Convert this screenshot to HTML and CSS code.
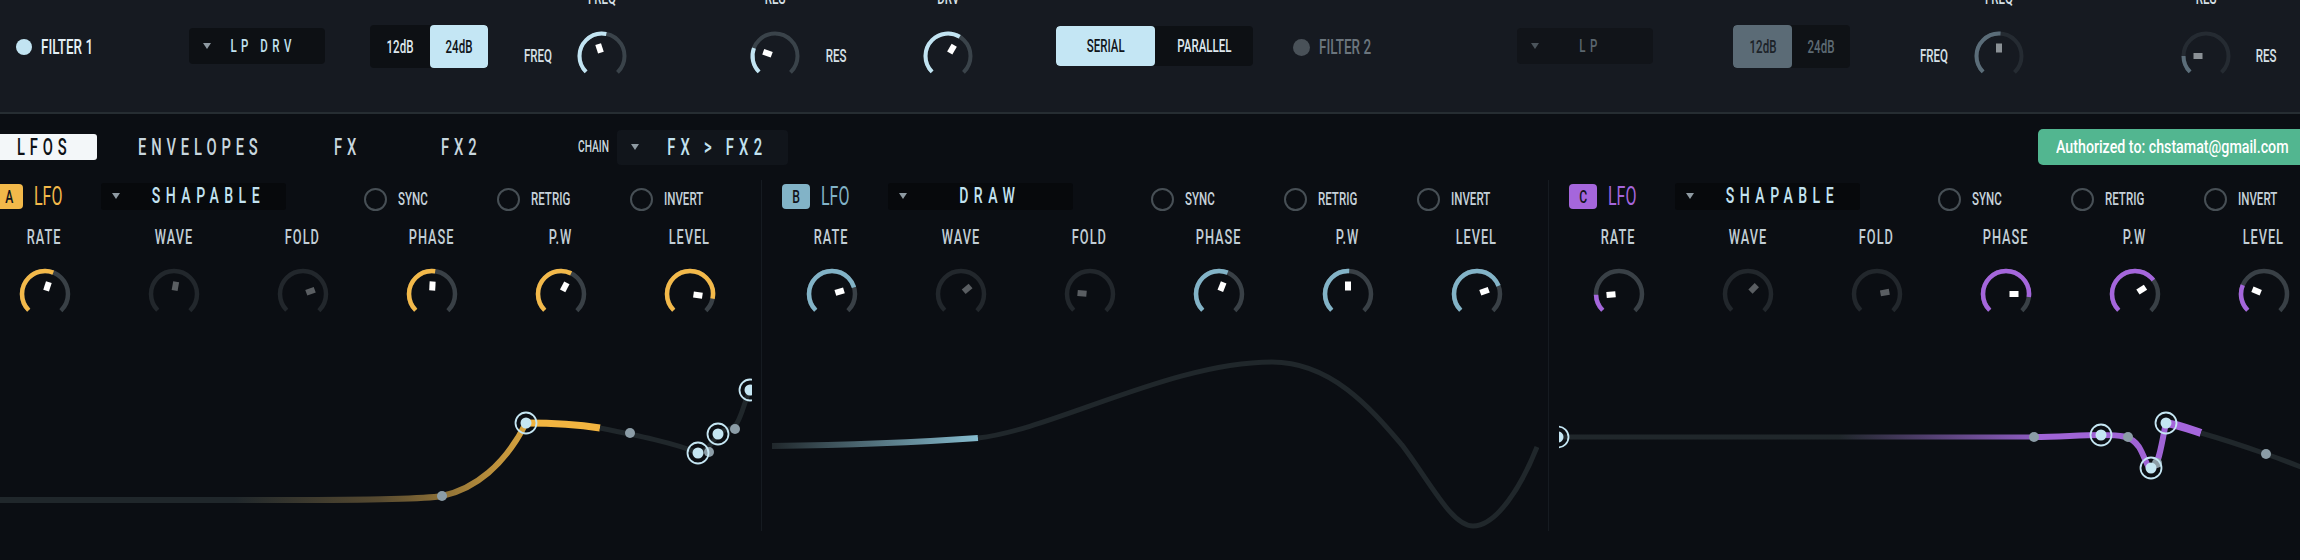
FILE: index.html
```html
<!DOCTYPE html>
<html lang="en">
<head>
<meta charset="utf-8">
<title>Synth LFO</title>
<link rel="stylesheet" href="styles.css">
</head>
<body>
<header class="top">
  <div class="ftog f1tog"><span class="dot"></span><span class="tx">FILTER 1</span></div>
  <div class="dd ddf1"><span class="tri"></span><span class="ddt"><span class="tx">LP DRV</span></span></div>
  <div class="seg segf1"><span class="b w60"><span class="tx">12dB</span></span><span class="b on w58"><span class="tx">24dB</span></span></div>
  <div class="slab ml30"><span class="tx">FREQ</span></div>
  <div class="tk tk1 ml18"><span class="tlab"><span class="tx">FREQ</span></span>
    <svg class="knob" viewBox="0 0 52 52"><circle class="trk" cx="26" cy="26" r="22.5" stroke-dasharray="106.03 200" transform="rotate(135 26 26)"/><circle class="val" cx="26" cy="26" r="22.5" stroke-dasharray="56.94 200" transform="rotate(135 26 26)"/><rect class="ptr" x="23" y="13.5" width="6" height="9" transform="rotate(-18 26 26)"/></svg></div>
  <div class="tk tk1 ml121"><span class="tlab"><span class="tx">RES</span></span>
    <svg class="knob" viewBox="0 0 52 52"><circle class="trk" cx="26" cy="26" r="22.5" stroke-dasharray="106.03 200" transform="rotate(135 26 26)"/><circle class="val" cx="26" cy="26" r="22.5" stroke-dasharray="25.53 200" transform="rotate(135 26 26)"/><rect class="ptr" x="23" y="13.5" width="6" height="9" transform="rotate(-70 26 26)"/></svg></div>
  <div class="slab ml15"><span class="tx">RES</span></div>
  <div class="tk tk1 ml66"><span class="tlab"><span class="tx">DRV</span></span>
    <svg class="knob" viewBox="0 0 52 52"><circle class="trk" cx="26" cy="26" r="22.5" stroke-dasharray="106.03 200" transform="rotate(135 26 26)"/><circle class="val" cx="26" cy="26" r="22.5" stroke-dasharray="64.80 200" transform="rotate(135 26 26)"/><rect class="ptr" x="23" y="13.5" width="6" height="9" transform="rotate(30 26 26)"/></svg></div>
  <div class="seg segser"><span class="b on w99"><span class="tx">SERIAL</span></span><span class="b w98"><span class="tx">PARALLEL</span></span></div>
  <div class="ftog f2tog"><span class="dot"></span><span class="tx">FILTER 2</span></div>
  <div class="dd ddf2"><span class="tri"></span><span class="ddt"><span class="tx">LP</span></span></div>
  <div class="seg segf2"><span class="b on w59"><span class="tx">12dB</span></span><span class="b w58"><span class="tx">24dB</span></span></div>
  <div class="slab ml64"><span class="tx">FREQ</span></div>
  <div class="tk tk2 ml19"><span class="tlab"><span class="tx">FREQ</span></span>
    <svg class="knob" viewBox="0 0 52 52"><circle class="trk" cx="26" cy="26" r="22.5" stroke-dasharray="106.03 200" transform="rotate(135 26 26)"/><circle class="val" cx="26" cy="26" r="22.5" stroke-dasharray="54.19 200" transform="rotate(135 26 26)"/><rect class="ptr" x="23" y="13.5" width="6" height="9" transform="rotate(0 26 26)"/></svg></div>
  <div class="tk tk2 ml155"><span class="tlab"><span class="tx">RES</span></span>
    <svg class="knob" viewBox="0 0 52 52"><circle class="trk" cx="26" cy="26" r="22.5" stroke-dasharray="106.03 200" transform="rotate(135 26 26)"/><circle class="val" cx="26" cy="26" r="22.5" stroke-dasharray="17.67 200" transform="rotate(135 26 26)"/><rect class="ptr" x="23" y="13.5" width="6" height="9" transform="rotate(-90 26 26)"/></svg></div>
  <div class="slab ml14"><span class="tx">RES</span></div>
</header>

<nav class="tabs">
  <div class="tab tab-on"><span class="tx">LFOS</span></div>
  <div class="tab tab-env"><span class="tx">ENVELOPES</span></div>
  <div class="tab tab-fx"><span class="tx">FX</span></div>
  <div class="tab tab-fx2"><span class="tx">FX2</span></div>
  <div class="chain"><span class="tx">CHAIN</span></div>
  <div class="dd ddch"><span class="tri"></span><span class="ddt"><span class="tx">FX &gt; FX2</span></span></div>
  <div class="auth"><span class="tx">Authorized to: chstamat@gmail.com</span></div>
</nav>

<main class="lfos">
  <!-- LFO A -->
  <section class="panel lfo-a">
    <div class="hdr">
      <span class="badge"><span class="tx">A</span></span>
      <span class="lfo"><span class="tx">LFO</span></span>
      <div class="ldd"><span class="tri"></span><span class="ddt"><span class="tx">SHAPABLE</span></span></div>
      <div class="chks">
        <div class="chk"><span class="ring"></span><span class="tx">SYNC</span></div>
        <div class="chk"><span class="ring"></span><span class="tx">RETRIG</span></div>
        <div class="chk"><span class="ring"></span><span class="tx">INVERT</span></div>
      </div>
    </div>
    <div class="klabs">
      <div class="c"><span class="tx">RATE</span></div><div class="c"><span class="tx">WAVE</span></div><div class="c"><span class="tx">FOLD</span></div><div class="c"><span class="tx">PHASE</span></div><div class="c"><span class="tx">P.W</span></div><div class="c"><span class="tx">LEVEL</span></div>
    </div>
    <div class="knobs">
      <div class="c"><svg class="knob" viewBox="0 0 52 52"><circle class="trk" cx="26" cy="26" r="23" stroke-dasharray="108.39 200" transform="rotate(135 26 26)"/><circle class="val" cx="26" cy="26" r="23" stroke-dasharray="62.22 200" transform="rotate(135 26 26)"/><rect class="ptr" x="23" y="13.5" width="6" height="9" transform="rotate(18 26 26)"/></svg></div>
      <div class="c"><svg class="knob off" viewBox="0 0 52 52"><circle class="trk" cx="26" cy="26" r="23" stroke-dasharray="108.39 200" transform="rotate(135 26 26)"/><rect class="ptr" x="23" y="13.5" width="6" height="9" transform="rotate(10 26 26)"/></svg></div>
      <div class="c"><svg class="knob off" viewBox="0 0 52 52"><circle class="trk" cx="26" cy="26" r="23" stroke-dasharray="108.39 200" transform="rotate(135 26 26)"/><rect class="ptr" x="23" y="13.5" width="6" height="9" transform="rotate(70 26 26)"/></svg></div>
      <div class="c"><svg class="knob" viewBox="0 0 52 52"><circle class="trk" cx="26" cy="26" r="23" stroke-dasharray="108.39 200" transform="rotate(135 26 26)"/><circle class="val" cx="26" cy="26" r="23" stroke-dasharray="57.00 200" transform="rotate(135 26 26)"/><rect class="ptr" x="23" y="13.5" width="6" height="9" transform="rotate(3 26 26)"/></svg></div>
      <div class="c"><svg class="knob" viewBox="0 0 52 52"><circle class="trk" cx="26" cy="26" r="23" stroke-dasharray="108.39 200" transform="rotate(135 26 26)"/><circle class="val" cx="26" cy="26" r="23" stroke-dasharray="64.23 200" transform="rotate(135 26 26)"/><rect class="ptr" x="23" y="13.5" width="6" height="9" transform="rotate(28 26 26)"/></svg></div>
      <div class="c"><svg class="knob" viewBox="0 0 52 52"><circle class="trk" cx="26" cy="26" r="23" stroke-dasharray="108.39 200" transform="rotate(135 26 26)"/><circle class="val" cx="26" cy="26" r="23" stroke-dasharray="94.34 200" transform="rotate(135 26 26)"/><rect class="ptr" x="23" y="13.5" width="6" height="9" transform="rotate(98 26 26)"/></svg></div>
    </div>
    <svg class="graph" viewBox="0 0 767 196">
      <defs><linearGradient id="ga" gradientUnits="userSpaceOnUse" x1="250" y1="0" x2="541" y2="0"><stop offset="0" stop-color="#20272b"/><stop offset=".5" stop-color="#574a30"/><stop offset="1" stop-color="#d8a43f"/></linearGradient></defs>
      <path d="M0,165 L300,165 C400,165 440,164 457,161 C490,154 520,130 541,88" stroke="url(#ga)" stroke-width="6"/>
      <path d="M541,88 C570,88 596,90 615,93" stroke="#f2b440" stroke-width="7"/>
      <path class="ln" d="M615,93 C650,100 690,108 713,118 C720,118 726,110 733,99 C740,92 748,96 752,88 C757,80 760,65 765,55"/>
      <circle class="pt" cx="457" cy="161" r="5"/><circle class="pt" cx="645" cy="98" r="5"/><circle class="pt" cx="724" cy="117" r="5"/><circle class="pt" cx="750" cy="94" r="5"/>
      <circle class="nd-ring" cx="541" cy="88" r="10.5"/><circle class="nd" cx="541" cy="88" r="5.5"/>
      <circle class="nd-ring" cx="713" cy="118" r="10.5"/><circle class="nd" cx="713" cy="118" r="5.5"/>
      <circle class="nd-ring" cx="733" cy="99" r="10.5"/><circle class="nd" cx="733" cy="99" r="5.5"/>
      <circle class="nd-ring" cx="765" cy="55" r="10.5"/><circle class="nd" cx="765" cy="55" r="5.5"/>
    </svg>
  </section>

  <!-- LFO B -->
  <section class="panel lfo-b">
    <div class="hdr">
      <span class="badge"><span class="tx">B</span></span>
      <span class="lfo"><span class="tx">LFO</span></span>
      <div class="ldd"><span class="tri"></span><span class="ddt"><span class="tx">DRAW</span></span></div>
      <div class="chks">
        <div class="chk"><span class="ring"></span><span class="tx">SYNC</span></div>
        <div class="chk"><span class="ring"></span><span class="tx">RETRIG</span></div>
        <div class="chk"><span class="ring"></span><span class="tx">INVERT</span></div>
      </div>
    </div>
    <div class="klabs">
      <div class="c"><span class="tx">RATE</span></div><div class="c"><span class="tx">WAVE</span></div><div class="c"><span class="tx">FOLD</span></div><div class="c"><span class="tx">PHASE</span></div><div class="c"><span class="tx">P.W</span></div><div class="c"><span class="tx">LEVEL</span></div>
    </div>
    <div class="knobs">
      <div class="c"><svg class="knob" viewBox="0 0 52 52"><circle class="trk" cx="26" cy="26" r="23" stroke-dasharray="108.39 200" transform="rotate(135 26 26)"/><circle class="val" cx="26" cy="26" r="23" stroke-dasharray="83.10 200" transform="rotate(135 26 26)"/><rect class="ptr" x="23" y="13.5" width="6" height="9" transform="rotate(73 26 26)"/></svg></div>
      <div class="c"><svg class="knob off" viewBox="0 0 52 52"><circle class="trk" cx="26" cy="26" r="23" stroke-dasharray="108.39 200" transform="rotate(135 26 26)"/><rect class="ptr" x="23" y="13.5" width="6" height="9" transform="rotate(50 26 26)"/></svg></div>
      <div class="c"><svg class="knob off" viewBox="0 0 52 52"><circle class="trk" cx="26" cy="26" r="23" stroke-dasharray="108.39 200" transform="rotate(135 26 26)"/><rect class="ptr" x="23" y="13.5" width="6" height="9" transform="rotate(-85 26 26)"/></svg></div>
      <div class="c"><svg class="knob" viewBox="0 0 52 52"><circle class="trk" cx="26" cy="26" r="23" stroke-dasharray="108.39 200" transform="rotate(135 26 26)"/><circle class="val" cx="26" cy="26" r="23" stroke-dasharray="62.62 200" transform="rotate(135 26 26)"/><rect class="ptr" x="23" y="13.5" width="6" height="9" transform="rotate(22 26 26)"/></svg></div>
      <div class="c"><svg class="knob" viewBox="0 0 52 52"><circle class="trk" cx="26" cy="26" r="23" stroke-dasharray="108.39 200" transform="rotate(135 26 26)"/><circle class="val" cx="26" cy="26" r="23" stroke-dasharray="55.00 200" transform="rotate(135 26 26)"/><rect class="ptr" x="23" y="13.5" width="6" height="9" transform="rotate(0 26 26)"/></svg></div>
      <div class="c"><svg class="knob" viewBox="0 0 52 52"><circle class="trk" cx="26" cy="26" r="23" stroke-dasharray="108.39 200" transform="rotate(135 26 26)"/><circle class="val" cx="26" cy="26" r="23" stroke-dasharray="81.49 200" transform="rotate(135 26 26)"/><rect class="ptr" x="23" y="13.5" width="6" height="9" transform="rotate(70 26 26)"/></svg></div>
    </div>
    <svg class="graph" viewBox="0 0 767 196">
      <defs><linearGradient id="gb" gradientUnits="userSpaceOnUse" x1="0" y1="0" x2="206" y2="0"><stop offset="0" stop-color="#20272b"/><stop offset="1" stop-color="#86bccf"/></linearGradient></defs>
      <path d="M0,111 C80,110 150,107 206,103" stroke="url(#gb)" stroke-width="6"/>
      <path class="ln" d="M206,103 C280,95 400,27 500,27 C560,27 600,75 630,110 C660,150 680,191 701,191 C725,191 750,150 765,112"/>
    </svg>
  </section>

  <!-- LFO C -->
  <section class="panel lfo-c">
    <div class="hdr">
      <span class="badge"><span class="tx">C</span></span>
      <span class="lfo"><span class="tx">LFO</span></span>
      <div class="ldd"><span class="tri"></span><span class="ddt"><span class="tx">SHAPABLE</span></span></div>
      <div class="chks">
        <div class="chk"><span class="ring"></span><span class="tx">SYNC</span></div>
        <div class="chk"><span class="ring"></span><span class="tx">RETRIG</span></div>
        <div class="chk"><span class="ring"></span><span class="tx">INVERT</span></div>
      </div>
    </div>
    <div class="klabs">
      <div class="c"><span class="tx">RATE</span></div><div class="c"><span class="tx">WAVE</span></div><div class="c"><span class="tx">FOLD</span></div><div class="c"><span class="tx">PHASE</span></div><div class="c"><span class="tx">P.W</span></div><div class="c"><span class="tx">LEVEL</span></div>
    </div>
    <div class="knobs">
      <div class="c"><svg class="knob" viewBox="0 0 52 52"><circle class="trk" cx="26" cy="26" r="23" stroke-dasharray="108.39 200" transform="rotate(135 26 26)"/><circle class="val" cx="26" cy="26" r="23" stroke-dasharray="17.26 200" transform="rotate(135 26 26)"/><rect class="ptr" x="23" y="13.5" width="6" height="9" transform="rotate(-95 26 26)"/></svg></div>
      <div class="c"><svg class="knob off" viewBox="0 0 52 52"><circle class="trk" cx="26" cy="26" r="23" stroke-dasharray="108.39 200" transform="rotate(135 26 26)"/><rect class="ptr" x="23" y="13.5" width="6" height="9" transform="rotate(45 26 26)"/></svg></div>
      <div class="c"><svg class="knob off" viewBox="0 0 52 52"><circle class="trk" cx="26" cy="26" r="23" stroke-dasharray="108.39 200" transform="rotate(135 26 26)"/><rect class="ptr" x="23" y="13.5" width="6" height="9" transform="rotate(80 26 26)"/></svg></div>
      <div class="c"><svg class="knob" viewBox="0 0 52 52"><circle class="trk" cx="26" cy="26" r="23" stroke-dasharray="108.39 200" transform="rotate(135 26 26)"/><circle class="val" cx="26" cy="26" r="23" stroke-dasharray="92.73 200" transform="rotate(135 26 26)"/><rect class="ptr" x="23" y="13.5" width="6" height="9" transform="rotate(90 26 26)"/></svg></div>
      <div class="c"><svg class="knob" viewBox="0 0 52 52"><circle class="trk" cx="26" cy="26" r="23" stroke-dasharray="108.39 200" transform="rotate(135 26 26)"/><circle class="val" cx="26" cy="26" r="23" stroke-dasharray="75.07 200" transform="rotate(135 26 26)"/><rect class="ptr" x="23" y="13.5" width="6" height="9" transform="rotate(57 26 26)"/></svg></div>
      <div class="c"><svg class="knob" viewBox="0 0 52 52"><circle class="trk" cx="26" cy="26" r="23" stroke-dasharray="108.39 200" transform="rotate(135 26 26)"/><circle class="val" cx="26" cy="26" r="23" stroke-dasharray="26.90 200" transform="rotate(135 26 26)"/><rect class="ptr" x="23" y="13.5" width="6" height="9" transform="rotate(-68 26 26)"/></svg></div>
    </div>
    <svg class="graph" viewBox="0 0 767 196">
      <defs><linearGradient id="gc" gradientUnits="userSpaceOnUse" x1="280" y1="0" x2="475" y2="0"><stop offset="0" stop-color="#20272b"/><stop offset="1" stop-color="#8d5cc0"/></linearGradient></defs>
      <path d="M0,102 L475,102" stroke="url(#gc)" stroke-width="5"/>
      <path d="M475,102 C500,102 520,100 542,100 C560,100 572,100 580,112 C586,122 588,133 592,133 C600,133 602,110 607,88" stroke="#a064d6" stroke-width="6"/>
      <path d="M607,88 C620,90 630,94 642,98" stroke="#a566dc" stroke-width="8"/>
      <path class="ln" d="M642,98 C670,106 690,113 707,119 C730,127 750,135 767,142"/>
      <circle class="pt" cx="475" cy="102" r="5"/><circle class="pt" cx="569" cy="102" r="5"/><circle class="pt" cx="598" cy="128" r="5"/><circle class="pt" cx="707" cy="119" r="5"/>
      <circle class="nd-ring" cx="-1" cy="102" r="10.5"/><circle class="nd" cx="-1" cy="102" r="5.5"/>
      <circle class="nd-ring" cx="542" cy="100" r="10.5"/><circle class="nd" cx="542" cy="100" r="5.5"/>
      <circle class="nd-ring" cx="592" cy="133" r="10.5"/><circle class="nd" cx="592" cy="133" r="5.5"/>
      <circle class="nd-ring" cx="607" cy="88" r="10.5"/><circle class="nd" cx="607" cy="88" r="5.5"/>
    </svg>
  </section>
</main>
</body>
</html>
```

FILE: styles.css
```css
* { box-sizing: border-box; margin: 0; padding: 0; }

body {
  width: 2300px;
  height: 560px;
  overflow: hidden;
  background: #0b0e13;
  font-family: Roboto, "Liberation Sans", sans-serif;
  font-weight: 500;
  color: #c6d2da;
  line-height: 1;
}

/* condensed text */
.tx {
  display: inline-block;
  white-space: nowrap;
  transform: scaleX(.64);
  transform-origin: left center;
}

/* ---------- top filter bar ---------- */
.top {
  display: flex;
  align-items: flex-start;
  height: 114px;
  background: #161a21;
  border-bottom: 2px solid #262d32;
  overflow: hidden;
}

.ftog { display: flex; align-items: center; height: 24px; margin-top: 35px; flex: none; }
.ftog .dot { flex: none; width: 16px; height: 16px; border-radius: 50%; background: #c2e4f2; margin-right: 9px; }
.ftog .tx { font-size: 21px; color: #e4f0f6; }
.f1tog { margin-left: 16px; width: 79px; }
.f2tog { margin-left: 40px; width: 87px; }
.f2tog .dot { width: 17px; height: 17px; background: #495158; }
.f2tog .tx { color: #6b757d; }

.tri {
  flex: none;
  width: 0; height: 0;
  border-left: 4px solid transparent;
  border-right: 4px solid transparent;
  border-top: 6px solid #8e9aa2;
}

.dd { display: flex; align-items: center; flex: none; border-radius: 4px; background: #0d1014; padding-left: 14px; }
.dd .ddt { flex: 1; display: flex; justify-content: center; padding-right: 10px; }
.dd .tx { transform-origin: center; }
.ddf1 { margin: 28px 0 0 94px; width: 136px; height: 36px; }
.ddf1 .tx { font-size: 18px; letter-spacing: 7px; color: #c2e2f0; }
.ddf2 { margin: 28px 0 0 137px; width: 136px; height: 36px; background: #111419; }
.ddf2 .tri { border-top-color: #4b545b; }
.ddf2 .tx { font-size: 18px; letter-spacing: 7px; color: #5b666e; }

.seg { display: flex; flex: none; border-radius: 4px; overflow: hidden; background: #0d1014; }
.seg .b { display: flex; justify-content: center; align-items: center; font-size: 18px; color: #dfe8ee; }
.seg .b .tx { transform-origin: center; }
.seg .on { background: #c4e6f4; color: #10151a; border-radius: 4px; }
.segf1 { margin: 25px 0 0 45px; height: 43px; }
.segser { margin: 26px 0 0 82px; height: 40px; }
.segf2 { margin: 25px 0 0 80px; height: 43px; background: #0f1216; }
.segf2 .b { color: #5d6a73; }
.segf2 .on { background: #5b6b76; color: #1c2228; }
.w58 { width: 58px; } .w59 { width: 59px; } .w60 { width: 60px; }
.w98 { width: 98px; } .w99 { width: 99px; }

.slab { flex: none; width: 40px; height: 20px; margin-top: 46px; display: flex; justify-content: center; align-items: center; font-size: 18px; color: #d6e0e6; }
.slab .tx { transform-origin: center; }

.ml14 { margin-left: 14px; } .ml15 { margin-left: 15px; } .ml18 { margin-left: 18px; }
.ml19 { margin-left: 19px; } .ml30 { margin-left: 30px; } .ml64 { margin-left: 64px; }
.ml66 { margin-left: 66px; } .ml121 { margin-left: 121px; } .ml155 { margin-left: 155px; }

.tk { flex: none; width: 52px; margin-top: -12px; display: flex; flex-direction: column; align-items: center; }
.tk .tlab { width: 52px; height: 20px; display: flex; justify-content: center; align-items: center; font-size: 18px; color: #d6e0e6; }
.tk .tlab .tx { transform-origin: center; }
.tk .knob { margin-top: 22px; }

.knob { display: block; width: 52px; height: 52px; }
.knob circle { fill: none; }
.tk .trk, .tk .val { stroke-width: 4; }
.tk1 .trk { stroke: #3a434a; }
.tk1 .val { stroke: #c2e4f2; }
.tk1 .ptr { fill: #ffffff; }
.tk2 .trk { stroke: #252b32; }
.tk2 .val { stroke: #5b6d79; }
.tk2 .ptr { fill: #8b9196; }

/* ---------- tab row ---------- */
.tabs { display: flex; align-items: center; height: 36px; margin-top: 15px; }
.tab { flex: none; display: flex; align-items: center; font-size: 23px; letter-spacing: 7.6px; color: #c8d6de; }
.tab-on { width: 97px; height: 26px; padding-left: 17px; background: #f3f7f9; color: #0d1116; border-radius: 0 3px 3px 0; }
.tab-env { margin-left: 41px; width: 196px; }
.tab-fx { width: 107px; }
.tab-fx2 { width: 137px; }
.chain { flex: none; width: 39px; font-size: 16px; color: #c8d6de; }
.ddch { width: 171px; height: 35px; background: #11151b; }
.ddch .ddt { padding-right: 16px; }
.ddch .tx { font-size: 23px; letter-spacing: 8.2px; color: #c2e2f0; }

.auth {
  margin-left: auto;
  flex: none;
  width: 262px;
  height: 36px;
  padding-left: 18px;
  display: flex;
  align-items: center;
  background: #52b690;
  border-radius: 5px 0 0 5px;
  color: #ffffff;
  font-size: 18px;
}
.auth .tx { transform: scaleX(.79); }

/* ---------- LFO panels ---------- */
.lfos { display: flex; margin: 15px 0 0 -25px; }
.panel { flex: none; width: 787px; height: 351px; padding-top: 2px; border-right: 1px solid #161b21; }
.lfo-a { --ac: #f3b94a; }
.lfo-b { --ac: #82b3c7; }
.lfo-c { --ac: #a566dc; }

.hdr { display: flex; align-items: center; height: 28px; }
.badge { flex: none; margin-left: 20px; width: 28px; height: 25px; border-radius: 4px; background: var(--ac); display: flex; justify-content: center; align-items: center; font-size: 19px; color: #11141a; }
.badge .tx { transform-origin: center; }
.lfo { flex: none; margin-left: 11px; width: 36px; font-size: 25px; font-weight: 400; color: var(--ac); }
.ldd { flex: none; margin-left: 31px; width: 185px; height: 27px; background: #07090c; border-radius: 3px; display: flex; align-items: center; padding-left: 11px; }
.ldd .ddt { flex: 1; display: flex; justify-content: center; }
.ldd .tx { transform-origin: center; font-size: 22px; letter-spacing: 8.5px; color: #c2e2f0; }

.chks { display: flex; margin-left: 78px; margin-top: 6px; }
.chk { flex: none; display: flex; align-items: center; width: 133px; font-size: 18px; color: #c6d2da; }
.ring { flex: none; width: 23px; height: 23px; border: 2px solid #474f55; border-radius: 50%; margin-right: 11px; }

.klabs, .knobs { display: grid; grid-template-columns: repeat(6, 129px); margin-left: 5px; }
.klabs { margin-top: 17px; }
.klabs .c { height: 20px; display: flex; justify-content: center; align-items: center; font-size: 20px; letter-spacing: 1.5px; color: #c2ced6; }
.klabs .tx { transform-origin: center; }
.knobs { margin-top: 21px; }
.knobs .c { display: flex; justify-content: center; }
.knobs .trk, .knobs .val { stroke-width: 4.5; }
.knobs .trk { stroke: #394046; }
.knobs .val { stroke: var(--ac); }
.knobs .ptr { fill: #ffffff; }
.knobs .off .trk { stroke: #22272c; }
.knobs .off .ptr { fill: #5a5e62; }

.graph { display: block; width: 767px; height: 196px; margin: 15px 0 0 10px; }
.graph path { fill: none; }
.ln { stroke: #20272b; stroke-width: 5; }
.nd-ring { fill: none; stroke: #c5e6f3; stroke-width: 1.8; }
.nd { fill: #c5e6f3; }
.pt { fill: #8c9da7; }
```
